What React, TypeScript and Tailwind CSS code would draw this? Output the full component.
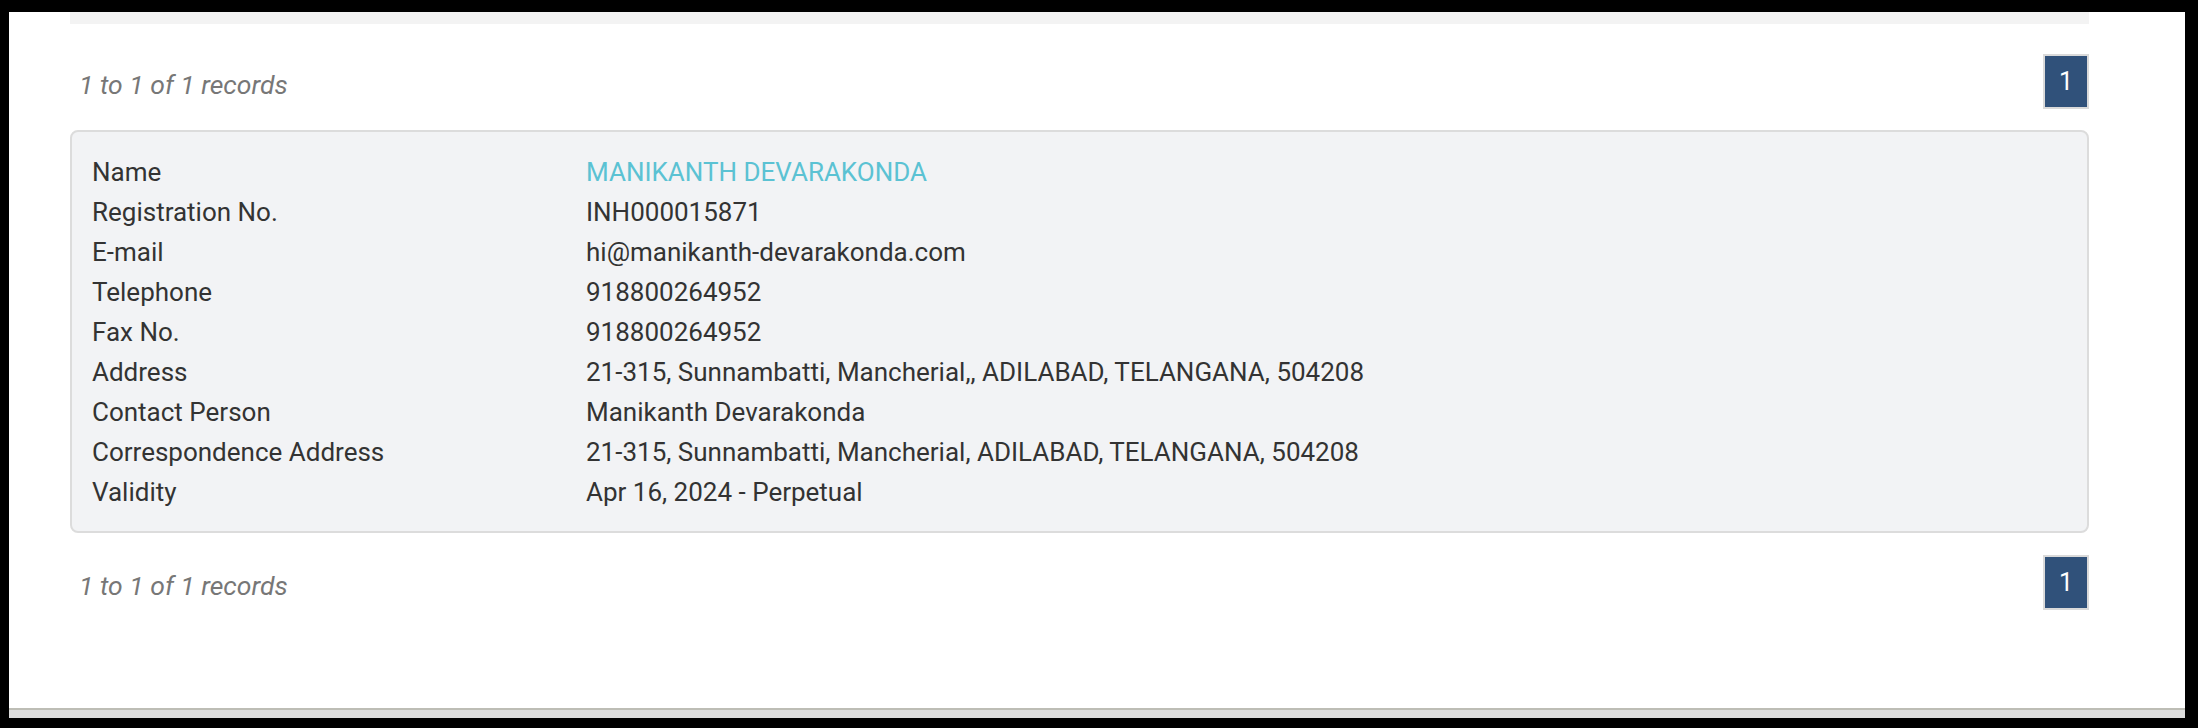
import React from 'react'

const rows: { label: string; value: string; highlight?: boolean }[] = [
  { label: 'Name', value: 'MANIKANTH DEVARAKONDA', highlight: true },
  { label: 'Registration No.', value: 'INH000015871' },
  { label: 'E-mail', value: 'hi@manikanth-devarakonda.com' },
  { label: 'Telephone', value: '918800264952' },
  { label: 'Fax No.', value: '918800264952' },
  { label: 'Address', value: '21-315, Sunnambatti, Mancherial,, ADILABAD, TELANGANA, 504208' },
  { label: 'Contact Person', value: 'Manikanth Devarakonda' },
  { label: 'Correspondence Address', value: '21-315, Sunnambatti, Mancherial, ADILABAD, TELANGANA, 504208' },
  { label: 'Validity', value: 'Apr 16, 2024 - Perpetual' },
]

function Pager() {
  return (
    <div className="flex items-center justify-between">
      <span className="pl-[9px] pt-[6px] text-[26.5px] italic text-[#777777]">1 to 1 of 1 records</span>
      <span className="flex h-[55px] w-[46px] items-center justify-center border-2 border-[#dadada] bg-[#30517a] text-[25px] text-white">
        1
      </span>
    </div>
  )
}

export default function App() {
  return (
    <div
      className="h-[728px] w-[2198px] bg-black pb-[10px] pl-[9px] pr-[13px] pt-[12px]"
      style={{ fontFamily: 'Roboto, "Liberation Sans", sans-serif' }}
    >
      <div className="flex h-full flex-col bg-white">
        <div className="pl-[61px] pr-[96px]">
          <div className="h-[12px] bg-[#f3f3f3]" />

          <div className="mt-[30px]">
            <Pager />
          </div>

          {/* Advisor details */}
          <div className="mt-[21px] rounded-[8px] border-2 border-[#dcdcdc] bg-[#f2f3f5] pb-[19px] pl-[20px] pt-[20px]">
            {rows.map(row => (
              <div key={row.label} className="flex h-[40px] items-center text-[26px] text-[#333333]">
                <div className="w-[494px] shrink-0">{row.label}</div>
                <div className={row.highlight ? 'text-[#5bc2d3]' : ''}>{row.value}</div>
              </div>
            ))}
          </div>

          <div className="mt-[22px]">
            <Pager />
          </div>
        </div>

        <div className="flex-1" />
        <div className="h-[10px] border-t-2 border-[#bdbdb5] bg-[#dcdcdc]" />
      </div>
    </div>
  )
}
